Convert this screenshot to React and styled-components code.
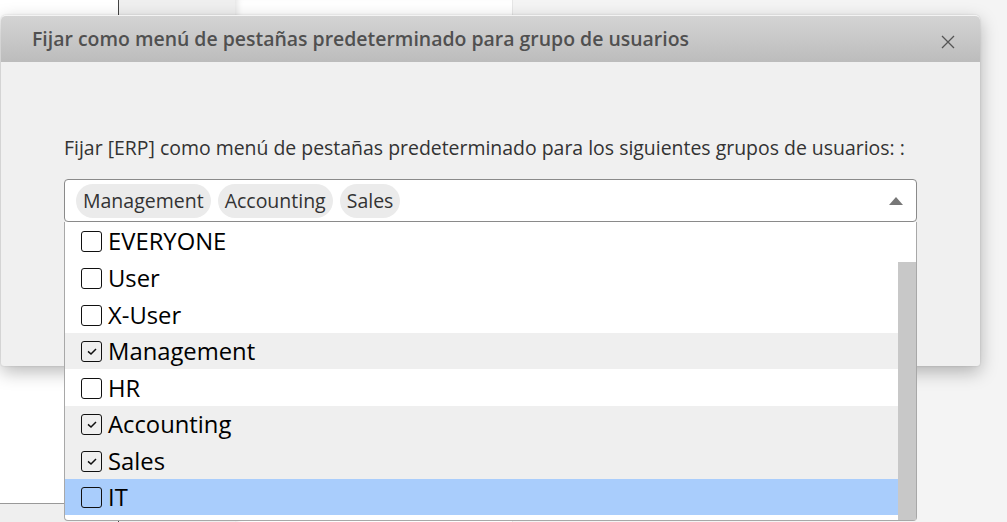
import React from "react";
import styled, { createGlobalStyle } from "styled-components";

const Global = createGlobalStyle`
  html, body { margin: 0; padding: 0; }
  body { font-family: "Open Sans", "Noto Sans", sans-serif; width: 1007px; height: 522px; overflow: hidden; }
  #root { height: 522px; }
`;

const Page = styled.div`
  position: relative;
  display: flex;
  width: 1007px;
  height: 522px;
  overflow: hidden;
  background: #f5f5f5;
`;

const SideCol = styled.div`
  width: 118px;
  display: flex;
  flex-direction: column;
  background: #fff;
  border-right: 1px solid #444;
`;

const SideFill = styled.div`
  flex: 1;
`;

const SideFooter = styled.div`
  height: 18px;
  border-top: 1px solid #999;
  background: #efefef;
`;

const GrayCol = styled.div`
  width: 116px;
  background: #efefef;
`;

const WhiteCol = styled.div`
  width: 277px;
  background: #fff;
  box-shadow: inset 6px 0 6px -4px rgba(0, 0, 0, 0.12);
  border-right: 1px solid #e6e6e6;
`;

const RestCol = styled.div`
  flex: 1;
  background: #f4f4f4;
`;

const Dialog = styled.div`
  position: absolute;
  top: 15px;
  left: 1px;
  width: 979px;
  height: 351px;
  display: flex;
  flex-direction: column;
  background: #f0f0f0;
  border-radius: 5px 5px 3px 3px;
  box-shadow: 0 6px 18px rgba(0, 0, 0, 0.28), 0 0 2px rgba(0, 0, 0, 0.15);
`;

const Header = styled.div`
  height: 46px;
  display: flex;
  align-items: center;
  justify-content: space-between;
  padding: 0 20px 0 31px;
  border-top: 1px solid #f4f4f4;
  border-radius: 5px 5px 0 0;
  background: linear-gradient(#d4d4d4, #bcbcbc);
`;

const Title = styled.div`
  font-size: 19.45px;
  font-weight: 600;
  color: #505050;
  margin-top: -1px;
`;

const Close = styled.button`
  width: 24px;
  height: 24px;
  padding: 0;
  border: none;
  background: transparent;
  display: flex;
  align-items: center;
  justify-content: center;
  margin-top: 5px;
`;

const Body = styled.div`
  flex: 1;
  padding: 73px 63px 0 63px;
`;

const Label = styled.div`
  font-size: 19.45px;
  color: #333;
  line-height: 26px;
`;

const SelectWrap = styled.div`
  position: relative;
  margin-top: 18px;
`;

const SelectBox = styled.div`
  height: 41px;
  display: flex;
  align-items: center;
  gap: 7px;
  padding: 0 11px;
  background: #fff;
  border: 1px solid #8a8a8a;
  border-radius: 4px;
`;

const Chip = styled.span`
  height: 34px;
  display: inline-flex;
  align-items: center;
  padding: 0 7px;
  border-radius: 17px;
  background: #ebebeb;
  font-size: 19.5px;
  color: #333;
`;

const Arrow = styled.span`
  margin-left: auto;
  margin-right: 2px;
  width: 0;
  height: 0;
  border-left: 7px solid transparent;
  border-right: 7px solid transparent;
  border-bottom: 8px solid #777;
`;

const Dropdown = styled.div`
  position: absolute;
  top: 43px;
  left: 0;
  width: 851px;
  height: 298px;
  background: #fff;
  border: 1px solid #a8a8a8;
  border-top: none;
  border-radius: 0 0 4px 4px;
  display: flex;
`;

const List = styled.div`
  flex: 1;
  display: flex;
  flex-direction: column;
`;

const Item = styled.div`
  height: ${(p) => p.h}px;
  flex-shrink: 0;
  display: flex;
  align-items: center;
  gap: 6px;
  padding-left: 16px;
  background: ${(p) => (p.active ? "#a9cdfc" : p.checked ? "#efefef" : "#fff")};
  font-size: 23.8px;
  color: #000;
`;

const Box = styled.span`
  width: 21px;
  height: 21px;
  border: 1.7px solid #111;
  border-radius: 3px;
  display: inline-flex;
  align-items: center;
  justify-content: center;
  box-sizing: border-box;
  margin-top: 1px;
`;

const Scrollbar = styled.div`
  width: 18px;
  display: flex;
  flex-direction: column;
`;

const Track = styled.div`
  height: 40px;
`;

const Thumb = styled.div`
  flex: 1;
  background: #c8c8c8;
`;

const items = [
  { name: "EVERYONE", h: 37 },
  { name: "User", h: 37 },
  { name: "X-User", h: 37 },
  { name: "Management", checked: true, h: 36 },
  { name: "HR", h: 37 },
  { name: "Accounting", checked: true, h: 36 },
  { name: "Sales", checked: true, h: 37 },
  { name: "IT", active: true, h: 36 },
];

export default function App() {
  return (
    <>
      <Global />
      <Page>
        <SideCol>
          <SideFill />
          <SideFooter />
        </SideCol>
        <GrayCol />
        <WhiteCol />
        <RestCol />
        <Dialog>
          <Header>
            <Title>Fijar como menú de pestañas predeterminado para grupo de usuarios</Title>
            <Close aria-label="Cerrar">
              <svg width="14" height="14" viewBox="0 0 14 14">
                <path d="M1 1 L13 13 M13 1 L1 13" stroke="#555" strokeWidth="1.3" fill="none" />
              </svg>
            </Close>
          </Header>
          <Body>
            <Label>Fijar [ERP] como menú de pestañas predeterminado para los siguientes grupos de usuarios: :</Label>
            <SelectWrap>
              <SelectBox>
                <Chip>Management</Chip>
                <Chip>Accounting</Chip>
                <Chip>Sales</Chip>
                <Arrow />
              </SelectBox>
              <Dropdown>
                <List>
                  {items.map((it) => (
                    <Item key={it.name} h={it.h} checked={it.checked} active={it.active}>
                      <Box>
                        {it.checked && (
                          <svg width="12" height="9" viewBox="0 0 12 9">
                            <path d="M2 4.4 L5 7 L10 2" stroke="#111" strokeWidth="1.5" fill="none" />
                          </svg>
                        )}
                      </Box>
                      {it.name}
                    </Item>
                  ))}
                </List>
                <Scrollbar>
                  <Track />
                  <Thumb />
                </Scrollbar>
              </Dropdown>
            </SelectWrap>
          </Body>
        </Dialog>
      </Page>
    </>
  );
}
